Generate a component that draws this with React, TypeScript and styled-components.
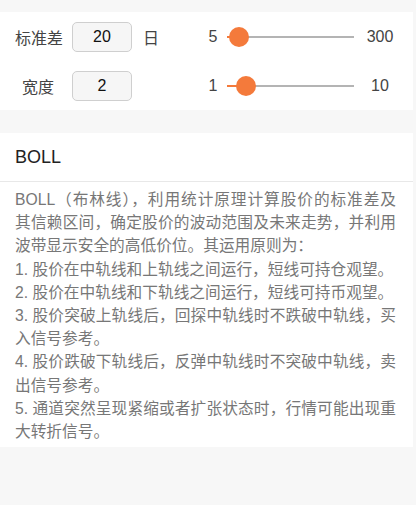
import React from "react";
import styled, { createGlobalStyle } from "styled-components";

const Global = createGlobalStyle`
  html, body { margin: 0; padding: 0; background: #f7f7f7; }
  body { font-family: "Liberation Sans", "Noto Sans CJK SC", sans-serif; }
  * { box-sizing: border-box; }
`;

const Page = styled.div`
  width: 416px;
  height: 505px;
  padding: 12px 3px 0 0;
  background: #f7f7f7;
`;

const Panel = styled.section<{ $gap?: number }>`
  background: #ffffff;
  margin-bottom: ${(p) => p.$gap ?? 0}px;
`;

const ParamRow = styled.div`
  display: flex;
  align-items: center;
  height: 49px;
  padding-left: 15px;
`;

const Label = styled.div`
  width: 46px;
  text-align: center;
  font-size: 16px;
  color: #444;
  white-space: nowrap;
`;

const ValueBox = styled.div`
  margin-left: 11px;
  width: 60px;
  height: 30px;
  border: 1px solid #cfcfcf;
  border-radius: 5px;
  background: #f6f6f6;
  display: flex;
  align-items: center;
  justify-content: center;
  font-size: 16px;
  color: #111;
`;

const Unit = styled.div`
  margin-left: 11px;
  width: 57px;
  font-size: 16px;
  color: #444;
`;

const RangeLabel = styled.div<{ $w: number }>`
  width: ${(p) => p.$w}px;
  text-align: center;
  font-size: 16px;
  color: #444;
`;

const Track = styled.div`
  position: relative;
  margin-left: 1px;
  width: 127px;
  height: 20px;
`;

const Rail = styled.div`
  position: absolute;
  left: 0;
  right: 0;
  top: 9px;
  height: 2px;
  background: #b4b4b4;
`;

const Fill = styled.div`
  position: absolute;
  left: 0;
  top: 9px;
  height: 2px;
  background: #f47a3b;
`;

const Thumb = styled.div`
  position: absolute;
  top: 0;
  width: 20px;
  height: 20px;
  margin-left: -10px;
  border-radius: 50%;
  background: #f47a3b;
`;

const Header = styled.div`
  height: 49px;
  display: flex;
  align-items: center;
  padding-left: 15px;
  font-size: 18px;
  color: #222;
  border-bottom: 1px solid #e8e8e8;
`;

const Body = styled.div`
  padding: 6px 17px 4px 15px;
  font-size: 15.7px;
  line-height: 23.2px;
  color: #777;
`;

const Line = styled.div<{ $full?: boolean }>`
  white-space: nowrap;
  text-align: left;
  text-align-last: ${(p) => (p.$full ? "justify" : "left")};
`;

type SliderProps = { value: number; min: number; max: number };

const Slider = ({ value, min, max }: SliderProps) => {
  const frac = (value - min) / (max - min);
  const center = 6 + frac * 115;
  return (
    <Track>
      <Rail />
      <Fill style={{ width: center }} />
      <Thumb style={{ left: center }} />
    </Track>
  );
};

const params = [
  { label: "标准差", value: 20, unit: "日", min: 5, max: 300 },
  { label: "宽度", value: 2, unit: "", min: 1, max: 10 },
];

const lines: { text: string; full?: boolean }[] = [
  { text: "BOLL（布林线），利用统计原理计算股价的标准差及", full: true },
  { text: "其信赖区间，确定股价的波动范围及未来走势，并利用", full: true },
  { text: "波带显示安全的高低价位。其运用原则为：" },
  { text: "1. 股价在中轨线和上轨线之间运行，短线可持仓观望。" },
  { text: "2. 股价在中轨线和下轨线之间运行，短线可持币观望。" },
  { text: "3. 股价突破上轨线后，回探中轨线时不跌破中轨线，买", full: true },
  { text: "入信号参考。" },
  { text: "4. 股价跌破下轨线后，反弹中轨线时不突破中轨线，卖", full: true },
  { text: "出信号参考。" },
  { text: "5. 通道突然呈现紧缩或者扩张状态时，行情可能出现重", full: true },
  { text: "大转折信号。" },
];

export default function App() {
  return (
    <>
      <Global />
      <Page>
        <Panel $gap={23}>
          {params.map((p) => (
            <ParamRow key={p.label}>
              <Label>{p.label}</Label>
              <ValueBox>{p.value}</ValueBox>
              <Unit>{p.unit}</Unit>
              <RangeLabel $w={26}>{p.min}</RangeLabel>
              <Slider value={p.value} min={p.min} max={p.max} />
              <RangeLabel $w={52}>{p.max}</RangeLabel>
            </ParamRow>
          ))}
        </Panel>
        <Panel>
          <Header>BOLL</Header>
          <Body>
            {lines.map((l) => (
              <Line key={l.text} $full={l.full}>
                {l.text}
              </Line>
            ))}
          </Body>
        </Panel>
      </Page>
    </>
  );
}
